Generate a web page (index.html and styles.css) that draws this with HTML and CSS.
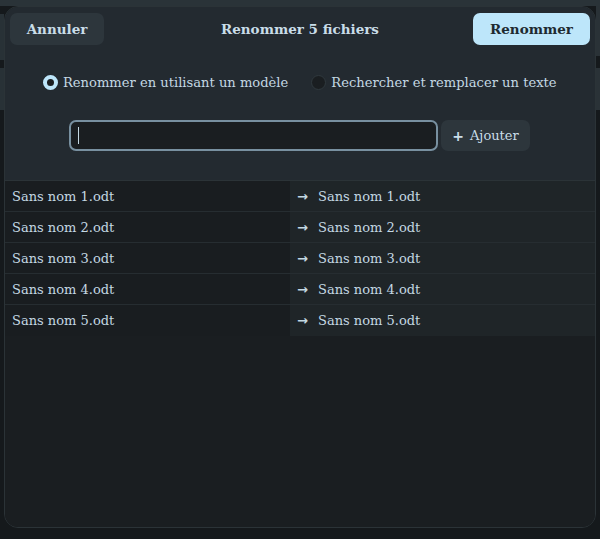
FILE: index.html
```html
<!DOCTYPE html>
<html lang="fr">
<head>
<meta charset="utf-8">
<title>Renommer 5 fichiers</title>
<link rel="stylesheet" href="styles.css">
</head>
<body>
<div class="backdrop">
  <div class="dialog">
    <div class="top">
      <header class="header">
        <button class="btn btn-flat">Annuler</button>
        <h1 class="title">Renommer 5 fichiers</h1>
        <button class="btn btn-primary">Renommer</button>
      </header>
      <div class="modes">
        <label class="radio"><span class="dot on"></span>Renommer en utilisant un modèle</label>
        <label class="radio"><span class="dot"></span>Rechercher et remplacer un texte</label>
      </div>
      <div class="entry-row">
        <div class="entry"><span class="caret"></span></div>
        <button class="btn btn-add"><span class="plus">+</span>Ajouter</button>
      </div>
    </div>
    <div class="list">
      <div class="col col-old">
        <div class="row">Sans nom 1.odt</div>
        <div class="row">Sans nom 2.odt</div>
        <div class="row">Sans nom 3.odt</div>
        <div class="row">Sans nom 4.odt</div>
        <div class="row">Sans nom 5.odt</div>
      </div>
      <div class="col col-new">
        <div class="row"><span class="arrow">→</span>Sans nom 1.odt</div>
        <div class="row"><span class="arrow">→</span>Sans nom 2.odt</div>
        <div class="row"><span class="arrow">→</span>Sans nom 3.odt</div>
        <div class="row"><span class="arrow">→</span>Sans nom 4.odt</div>
        <div class="row"><span class="arrow">→</span>Sans nom 5.odt</div>
      </div>
    </div>
  </div>
</div>
</body>
</html>
```

FILE: styles.css
```css
html, body {
  margin: 0;
  height: 100%;
}
body {
  background-color: #15191c;
  background-image:
    linear-gradient(#2a3338, #2a3338),
    linear-gradient(#283136, #283136),
    linear-gradient(#283136, #283136),
    linear-gradient(#2a3237, #2a3237),
    linear-gradient(#2a3237, #2a3237);
  background-repeat: no-repeat;
  background-size: 100% 6px, 4px 46px, 4px 42px, 4px 50px, 4px 42px;
  background-position: 0 0, 0 14px, 0 68px, 596px 6px, 596px 68px;
  font-family: "DejaVu Serif", "Liberation Serif", serif;
  color: #c4d8e3;
  font-size: 13px;
}
.backdrop {
  padding: 6px 4px 11px 4px;
  height: 539px;
  box-sizing: border-box;
}
.dialog {
  height: 100%;
  box-sizing: border-box;
  border: 1px solid #2b3337;
  border-radius: 14px;
  background: #1a1e21;
  overflow: hidden;
  display: flex;
  flex-direction: column;
}
.top {
  background: #232a30;
  border-bottom: 1px solid #2b3337;
  height: 174px;
  box-sizing: border-box;
}
.header {
  display: grid;
  grid-template-columns: 1fr auto 1fr;
  align-items: center;
  padding: 6px 5px 0 5px;
  height: 32px;
}
.header .btn-flat { justify-self: start; }
.header .btn-primary { justify-self: end; }
.title {
  margin: 0;
  font-size: 13.5px;
  font-weight: bold;
  color: #c9dde8;
  text-align: center;
}
.btn {
  font-family: inherit;
  font-size: 13.5px;
  font-weight: bold;
  border: none;
  border-radius: 7px;
  height: 32px;
  padding: 0;
  color: #c9dde8;
  background: #2d363c;
}
.btn-flat {
  width: 94px;
}
.btn-primary {
  width: 117px;
  background: #bde6fa;
  color: #1e2a31;
}
.modes {
  display: flex;
  gap: 23px;
  padding: 27px 0 0 38px;
  height: 20px;
  align-items: center;
}
.radio {
  display: flex;
  align-items: center;
  gap: 5px;
  font-size: 13.1px;
}
.dot {
  width: 15px;
  height: 15px;
  border-radius: 50%;
  box-sizing: border-box;
  background: #1a1e21;
  border: 1px solid #30393e;
}
.dot.on {
  background: #1a1e21;
  border: 4px solid #bde6fa;
}
.entry-row {
  display: flex;
  gap: 3px;
  padding: 28px 0 0 64px;
  align-items: center;
}
.entry {
  width: 369px;
  height: 31px;
  box-sizing: border-box;
  border: 2px solid #7890a0;
  border-radius: 7px;
  background: #1a1e21;
  display: flex;
  align-items: center;
  padding-left: 7px;
}
.caret {
  width: 1px;
  height: 17px;
  background: #c4d8e3;
}
.btn-add {
  width: 89px;
  height: 31px;
  font-size: 13px;
  font-weight: normal;
  display: flex;
  align-items: center;
  justify-content: center;
  gap: 6px;
}
.plus {
  font-family: "DejaVu Sans", sans-serif;
  font-weight: bold;
  font-size: 14px;
}
.list {
  flex: 1;
  display: flex;
  align-items: flex-start;
  background: #1a1e21;
}
.col {
  display: flex;
  flex-direction: column;
}
.col-old {
  width: 285px;
  background: #191d20;
}
.col-new {
  flex: 1;
  background: #1f2528;
}
.row {
  height: 31px;
  box-sizing: border-box;
  border-bottom: 1px solid #262d31;
  display: flex;
  align-items: center;
  padding-left: 7px;
}
.col-old .row:last-child,
.col-new .row:last-child {
  border-bottom: none;
}
.col-new .row {
  padding-left: 7px;
}
.arrow {
  font-family: "DejaVu Sans", sans-serif;
  font-weight: bold;
  font-size: 13px;
  width: 21px;
}
```
